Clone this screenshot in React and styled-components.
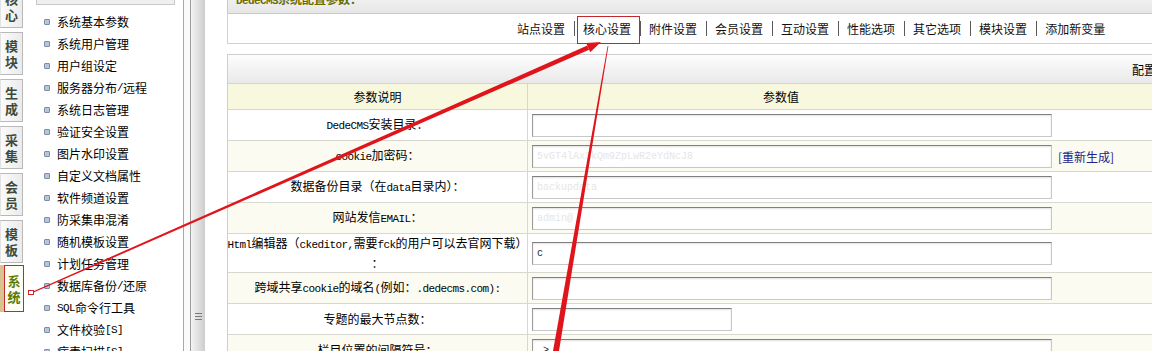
import React from "react";
import styled, { createGlobalStyle, css } from "styled-components";

const GlobalStyle = createGlobalStyle`
  html, body {
    margin: 0;
    padding: 0;
    background: #fff;
    overflow: hidden;
  }
  body {
    font-family: "Noto Sans CJK SC", "Liberation Sans", sans-serif;
    font-size: 12px;
    color: #000;
  }
`;

const Page = styled.div`
  position: relative;
  display: flex;
  width: 100vw;
  height: 351px;
  overflow: hidden;
`;

const LeftFrame = styled.div`
  flex: 0 0 183px;
  display: flex;
  align-items: flex-start;
  border-right: 1px solid #a9a9a9;
`;

const TabColumn = styled.div`
  flex: 0 0 25px;
  display: flex;
  flex-direction: column;
  gap: 4px;
  margin-top: -15px;
`;

const Tab = styled.div`
  flex-shrink: 0;
  box-sizing: border-box;
  width: 23px;
  height: 43px;
  display: flex;
  flex-direction: column;
  align-items: center;
  justify-content: center;
  border: 1px solid #b9b9b9;
  border-left-color: #e2e2e2;
  background: linear-gradient(to right, #fbfbfb, #ebebeb);
  color: #3b4a3b;
  font-size: 13px;
  font-weight: bold;
  line-height: 16px;

  ${(p) =>
    p.active &&
    css`
      width: 20px;
      height: 47px;
      margin-top: -2px;
      margin-left: 4px;
      border: 1px solid #c0282d;
      background: #fdfdf3;
      color: #5b7a00;
      box-shadow: -4px 0 0 #d9c48f;
    `}
`;

const MenuColumn = styled.div`
  flex: 1;
  display: flex;
  flex-direction: column;
`;

const MenuHead = styled.div`
  flex-shrink: 0;
  box-sizing: border-box;
  height: 20px;
  margin: -15px 8px 0 11px;
  border: 1px solid #c8c8c8;
  background: #efefef;
`;

const MenuList = styled.ul`
  flex-shrink: 0;
  list-style: none;
  margin: 6px 0 0;
  padding: 0;
  display: flex;
  flex-direction: column;
`;

const MenuItem = styled.li`
  flex-shrink: 0;
  height: 22px;
  display: flex;
  align-items: center;
  padding-left: 19px;
  white-space: nowrap;
  line-height: 16px;
`;

const Bullet = styled.span`
  box-sizing: border-box;
  width: 6px;
  height: 6px;
  margin-right: 7px;
  border: 1px solid #7d8ba5;
  border-radius: 1px;
  background: #b9c5da;
`;

const Splitter = styled.div`
  flex: 0 0 21px;
  display: flex;
  padding-left: 6px;
  box-sizing: border-box;
  background: #fafafa;
`;

const SplitBar = styled.div`
  flex: 1;
  display: flex;
  flex-direction: column;
  justify-content: flex-end;
  align-items: center;
  padding-bottom: 31px;
  border-left: 1px solid #9c9c9c;
  background: linear-gradient(to right, #f3f3f3, #cdcdcd);
`;

const Grip = styled.span`
  width: 7px;
  height: 7px;
  background: repeating-linear-gradient(#7a7a7a 0 1px, transparent 1px 3px);
`;

const Main = styled.div`
  flex: 0 0 1190px;
  padding-left: 22px;
  box-sizing: border-box;
`;

const TitleBar = styled.div`
  box-sizing: border-box;
  height: 25px;
  margin-top: -11px;
  padding: 1px 0 0 8px;
  border: 1px solid #c9c9c9;
  background: linear-gradient(#f7f7f7, #e6e6e6);
  color: #6b6b00;
  font-weight: bold;
  line-height: 16px;
`;

const NavBar = styled.div`
  box-sizing: border-box;
  height: 30px;
  display: flex;
  align-items: center;
  padding-left: 289px;
  border: 1px solid #d0d0d0;
  border-top: none;
  background: #fff;
`;

const NavItem = styled.span`
  position: relative;
  line-height: 16px;
  color: #111;
  white-space: nowrap;

  ${(p) =>
    p.active &&
    css`
      &::after {
        content: "";
        position: absolute;
        left: -6px;
        right: -9px;
        top: -5px;
        bottom: -7px;
        border: 1px solid #c0282d;
      }
    `}
`;

const NavSep = styled.span`
  width: 1px;
  height: 15px;
  margin: 0 8px 0 9px;
  background: #5a5a5a;
`;

const ConfigTable = styled.div`
  margin-top: 10px;
  border: 1px solid #cfcfcf;
  border-bottom: none;
`;

const TableHead = styled.div`
  height: 28px;
  display: flex;
  align-items: center;
  padding-left: 904px;
  border-bottom: 1px solid #d4d4d4;
  background: linear-gradient(#fdfdfd, #e9e9e9);
  white-space: nowrap;
`;

const ColHead = styled.div`
  display: grid;
  grid-template-columns: 300px 506px 1fr;
  height: 25px;
  border-bottom: 1px solid #d6d6cc;
  background: #f8f8de;
`;

const HeadCell = styled.div`
  display: flex;
  align-items: center;
  justify-content: center;
  ${(p) => p.divider && "border-right: 1px solid #d6d6cc;"}
`;

const Row = styled.div`
  display: grid;
  grid-template-columns: 300px 526px 1fr;
  height: ${(p) => p.height || 30}px;
  border-bottom: 1px solid #d8d8d0;
  background: ${(p) => (p.alt ? "#fbfbf1" : "#fff")};
`;

const LabelCell = styled.div`
  display: flex;
  align-items: center;
  justify-content: center;
  text-align: center;
  line-height: 18px;
  white-space: nowrap;
  border-right: 1px solid #d8d8d0;
`;

const ValueCell = styled.div`
  display: flex;
  align-items: center;
  padding-left: 4px;
`;

const ExtraCell = styled.div`
  display: flex;
  align-items: center;
  padding-left: 4px;
  white-space: nowrap;
`;

const Field = styled.input`
  box-sizing: border-box;
  width: ${(p) => p.w}px;
  height: 23px;
  margin: 0;
  padding: 0 4px;
  border: 1px solid;
  border-color: #7f7f7f #c8c8c8 #c8c8c8 #9a9a9a;
  box-shadow: inset 0 1px 2px rgba(0, 0, 0, 0.12);
  background: #fff;
  font-family: "Liberation Mono", monospace;
  font-size: 10px;
  color: ${(p) => (p.faint ? "#e6e6e6" : "#222")};
  outline: none;
`;

const Regen = styled.a`
  color: #22228a;
  text-decoration: none;
`;

const Latin = styled.span`
  font-family: "Liberation Mono", monospace;
  font-size: 11px;
  letter-spacing: -0.6px;
`;

const Overlay = styled.svg`
  position: absolute;
  left: 0;
  top: 0;
  pointer-events: none;
`;

const sim = (text) =>
  text
    .split(/([\x21-\x7e]+)/)
    .map((part, i) => (i % 2 ? <Latin key={i}>{part}</Latin> : part));

const tabs = ["核心", "模块", "生成", "采集", "会员", "模板", "系统"];

const menu = [
  "系统基本参数",
  "系统用户管理",
  "用户组设定",
  "服务器分布/远程",
  "系统日志管理",
  "验证安全设置",
  "图片水印设置",
  "自定义文档属性",
  "软件频道设置",
  "防采集串混淆",
  "随机模板设置",
  "计划任务管理",
  "数据库备份/还原",
  "SQL命令行工具",
  "文件校验[S]",
  "病毒扫描[S]",
];

const navs = [
  "站点设置",
  "核心设置",
  "附件设置",
  "会员设置",
  "互动设置",
  "性能选项",
  "其它选项",
  "模块设置",
  "添加新变量",
];

const rows = [
  { label: "DedeCMS安装目录：", value: "" },
  { label: "cookie加密码：", value: "5vGT4lAx3kQm9ZpLwR2eYdNcJ8", faint: true, extra: "[重新生成]" },
  { label: "数据备份目录（在data目录内）：", value: "backupdata", faint: true },
  { label: "网站发信EMAIL：", value: "admin@", faint: true },
  { label: ["Html编辑器（ckeditor,需要fck的用户可以去官网下载）", "："], value: "c", height: 38 },
  { label: "跨域共享cookie的域名(例如：.dedecms.com):", value: "" },
  { label: "专题的最大节点数：", value: "", w: 200 },
  { label: "栏目位置的间隔符号：", value: " >" },
];

const Annotations = () => (
  <Overlay width="1152" height="351" viewBox="0 0 1152 351">
    <polygon points="30.7,292.4 587.3,45.5 589.1,49.7 31.3,293.6" fill="#e0141b" />
    <polygon points="601,42 586.2,43 590.2,52.2" fill="#e0141b" />
    <rect x="28.5" y="290.5" width="5" height="4" fill="#fff" stroke="#d0202a" strokeWidth="1" />
    <polygon points="607.6,46 608.4,46 559,351 553,351" fill="#e0141b" />
  </Overlay>
);

export default function App() {
  return (
    <>
      <GlobalStyle />
      <Page>
        <LeftFrame>
          <TabColumn>
            {tabs.map((t) => (
              <Tab key={t} active={t === "系统"}>
                <span>{t[0]}</span>
                <span>{t[1]}</span>
              </Tab>
            ))}
          </TabColumn>
          <MenuColumn>
            <MenuHead />
            <MenuList>
              {menu.map((m) => (
                <MenuItem key={m}>
                  <Bullet />
                  {sim(m)}
                </MenuItem>
              ))}
            </MenuList>
          </MenuColumn>
        </LeftFrame>

        <Splitter>
          <SplitBar>
            <Grip />
          </SplitBar>
        </Splitter>

        <Main>
          <TitleBar>{sim("DedeCMS系统配置参数：")}</TitleBar>
          <NavBar>
            {navs.map((n, i) => (
              <React.Fragment key={n}>
                {i > 0 && <NavSep />}
                <NavItem active={n === "核心设置"}>{n}</NavItem>
              </React.Fragment>
            ))}
          </NavBar>

          <ConfigTable>
            <TableHead>配置参数说明</TableHead>
            <ColHead>
              <HeadCell divider>参数说明</HeadCell>
              <HeadCell>参数值</HeadCell>
              <HeadCell />
            </ColHead>
            {rows.map((r, i) => (
              <Row key={i} alt={i % 2 === 1} height={r.height}>
                <LabelCell>
                  {Array.isArray(r.label) ? (
                    <span>
                      {sim(r.label[0])}
                      <br />
                      {r.label[1]}
                    </span>
                  ) : (
                    <span>{sim(r.label)}</span>
                  )}
                </LabelCell>
                <ValueCell>
                  <Field w={r.w || 520} faint={r.faint} defaultValue={r.value} readOnly />
                </ValueCell>
                <ExtraCell>{r.extra && <Regen href="#">{r.extra}</Regen>}</ExtraCell>
              </Row>
            ))}
          </ConfigTable>
        </Main>

        <Annotations />
      </Page>
    </>
  );
}
